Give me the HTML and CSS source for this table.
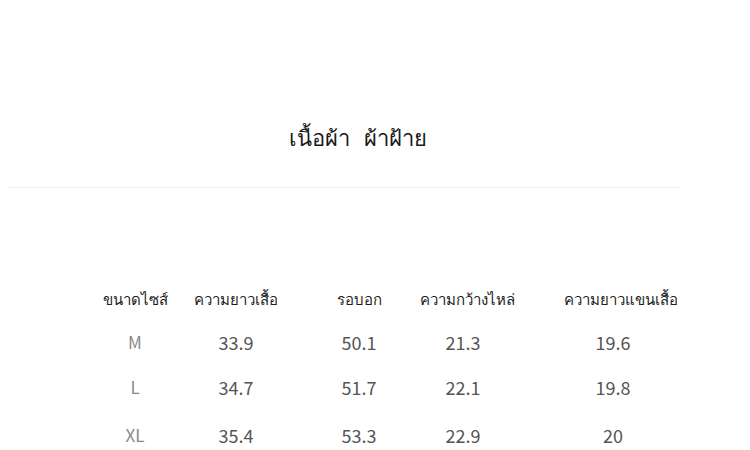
FILE: index.html
```html
<!DOCTYPE html>
<html lang="th">
<head>
<meta charset="utf-8">
<link rel="stylesheet" href="styles.css">
</head>
<body>
<div class="page">
  <h1 class="title">เนื้อผ้า&nbsp;&nbsp;&nbsp;ผ้าฝ้าย</h1>
  <div class="rule"></div>
  <div class="table">
    <div class="row head">
      <div class="c c1">ขนาดไซส์</div>
      <div class="c c2">ความยาวเสื้อ</div>
      <div class="c c3">รอบอก</div>
      <div class="c c4">ความกว้างไหล่</div>
      <div class="c c5">ความยาวแขนเสื้อ</div>
    </div>
    <div class="row">
      <div class="c c1 size">M</div>
      <div class="c c2">33.9</div>
      <div class="c c3">50.1</div>
      <div class="c c4">21.3</div>
      <div class="c c5">19.6</div>
    </div>
    <div class="row">
      <div class="c c1 size">L</div>
      <div class="c c2">34.7</div>
      <div class="c c3">51.7</div>
      <div class="c c4">22.1</div>
      <div class="c c5">19.8</div>
    </div>
    <div class="row last">
      <div class="c c1 size">XL</div>
      <div class="c c2">35.4</div>
      <div class="c c3">53.3</div>
      <div class="c c4">22.9</div>
      <div class="c c5">20</div>
    </div>
  </div>
</div>
</body>
</html>
```

FILE: styles.css
```css
html, body {
  margin: 0;
  padding: 0;
  background: #fff;
}
body {
  font-family: "Noto Sans CJK SC", "Noto Sans", sans-serif;
  color: #222;
}
.page {
  width: 750px;
  height: 450px;
  overflow: hidden;
}
.title {
  margin: 0;
  padding-top: 116px;
  width: 716px;
  text-align: center;
  font-weight: normal;
  font-size: 22px;
  line-height: 40px;
  color: #1a1a1a;
}
.rule {
  margin: 31px 0 0 8px;
  width: 672px;
  height: 1px;
  background: #eeeeee;
}
.table {
  margin-top: 93px;
  display: flex;
  flex-direction: column;
  padding-left: 96px;
}
.row {
  display: flex;
  align-items: center;
  height: 45px;
}
.row.head {
  height: 38px;
}
.row.last {
  margin-top: 3px;
}
.c {
  text-align: center;
  font-size: 18px;
  color: #555;
  white-space: nowrap;
}
.head .c {
  font-size: 15px;
  color: #1e1e1e;
}
.c1 { width: 78px; }
.c2 { width: 124px; }
.c3 { width: 122px; }
.c4 { width: 86px; }
.c5 { width: 214px; }
.head .c5 { padding-left: 8px; }
.size {
  color: #8a8a8a;
  font-size: 17px;
}
```
